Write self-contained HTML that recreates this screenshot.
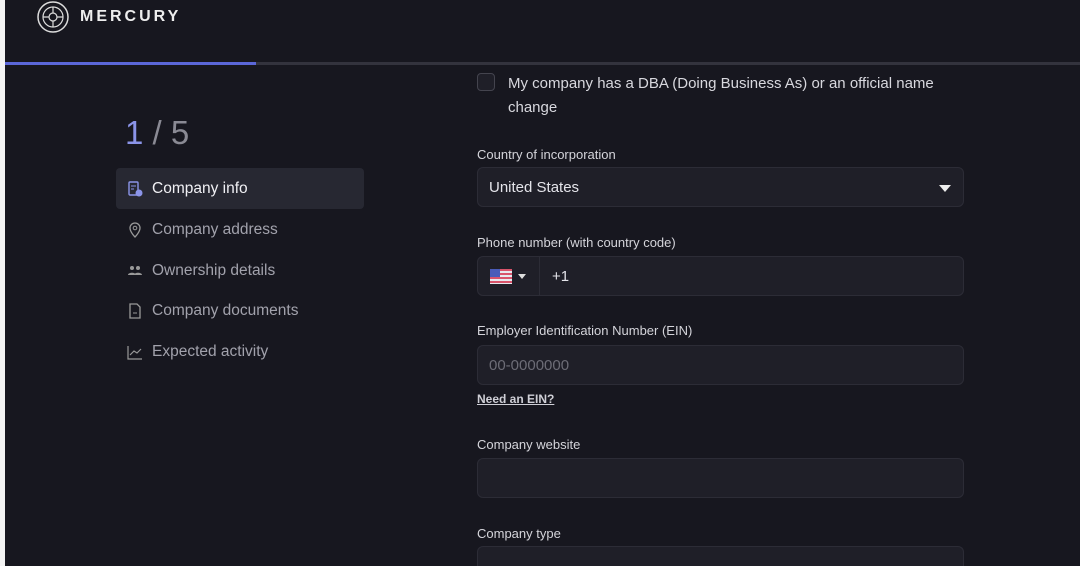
<!DOCTYPE html>
<html style="width:1080px;height:566px;overflow:hidden"><head><style>
*{margin:0;padding:0;box-sizing:border-box}
body{width:1080px;height:566px;overflow:hidden;background:#17171f;font-family:"Liberation Sans",sans-serif;position:relative;color:#e4e4ea}
.strip{position:absolute;left:0;top:0;width:5px;height:566px;background:#f4f4f4}
.brand{font-size:16px;letter-spacing:3px;font-weight:bold;color:#eee;position:absolute;left:80px;top:8px}
.bar{position:absolute;left:5px;top:62px;width:1075px;height:3px;background:#33333d}
.bar i{position:absolute;left:0;top:0;width:251px;height:3px;background:#5b67d8}
.step{position:absolute;left:125px;top:114px;font-size:33px;color:#8a8a94}
.step b{color:#8b94e8;font-weight:normal}
.nav{position:absolute;left:116px;width:248px;height:41px;display:flex;align-items:center;padding-left:11px;font-size:15.5px;color:#a2a2ac;gap:9px}
.nav.act{background:#272832;border-radius:4px;color:#f0f0f4}
.nav svg{width:16px;height:16px}
.lbl{position:absolute;left:477px;font-size:13px;color:#d4d4da}
.inp{position:absolute;left:477px;width:487px;height:40px;background:#1f1f28;border:1px solid #2c2c36;border-radius:6px;font-size:15px;display:flex;align-items:center;padding-left:11px}
.caret{position:absolute;right:12px;top:17px;border-left:6px solid transparent;border-right:6px solid transparent;border-top:7px solid #eee}
</style></head><body>
<div class="strip"></div>
<svg style="position:absolute;left:36px;top:0" width="34" height="34" viewBox="0 0 34 34"><circle cx="17" cy="17" r="15" fill="none" stroke="#ddd" stroke-width="1.5"/><circle cx="17" cy="17" r="10" fill="none" stroke="#ddd" stroke-width="1.2"/><circle cx="17" cy="17" r="4" fill="none" stroke="#ddd" stroke-width="1.2"/><path d="M7 17h6M21 17h6M17 7v6M17 21v6" stroke="#ddd" stroke-width="1.2"/></svg>
<div class="brand">MERCURY</div>
<div class="bar"><i></i></div>
<div class="step"><b>1</b> / 5</div>
<div class="nav act" style="top:168px"><svg viewBox="0 0 16 16"><rect x="2" y="1" width="9" height="13" rx="1" fill="none" stroke="#8b94e8" stroke-width="1.4"/><path d="M4 5h5M4 8h3" stroke="#8b94e8"/><circle cx="12" cy="12" r="3.5" fill="#8b94e8"/></svg>Company info</div>
<div class="nav" style="top:209px"><svg viewBox="0 0 16 16"><path d="M8 15s5-5 5-9A5 5 0 0 0 3 6c0 4 5 9 5 9z" fill="none" stroke="#999" stroke-width="1.3"/><circle cx="8" cy="6" r="1.8" fill="none" stroke="#999"/></svg>Company address</div>
<div class="nav" style="top:250px"><svg viewBox="0 0 16 16"><circle cx="5" cy="5" r="2" fill="#999"/><circle cx="11" cy="5" r="2" fill="#999"/><path d="M1 12c0-3 8-3 8 0zM7 12c0-3 8-3 8 0z" fill="#999"/></svg>Ownership details</div>
<div class="nav" style="top:290px"><svg viewBox="0 0 16 16"><path d="M3 1h7l3 3v11H3z" fill="none" stroke="#999" stroke-width="1.3"/><path d="M6 10h4" stroke="#999"/></svg>Company documents</div>
<div class="nav" style="top:331px"><svg viewBox="0 0 16 16"><path d="M1 2v13h14" fill="none" stroke="#999" stroke-width="1.2"/><path d="M3 11l4-4 3 2 4-4" fill="none" stroke="#999" stroke-width="1.2"/></svg>Expected activity</div>

<div style="position:absolute;left:477px;top:73px;width:18px;height:18px;border:1.5px solid #44444e;border-radius:4px;background:#1f1f28"></div>
<div style="position:absolute;left:508px;top:72px;font-size:15px;line-height:24px;color:#d8d8de;width:460px">My company has a DBA (Doing Business As) or an official name change</div>
<div class="lbl" style="top:147px">Country of incorporation</div>
<div class="inp" style="top:167px">United States<div class="caret"></div></div>
<div class="lbl" style="top:235px">Phone number (with country code)</div>
<div class="inp" style="top:256px;padding-left:0">
<div style="width:62px;height:38px;border-right:1px solid #2c2c36;display:flex;align-items:center;padding-left:12px;gap:6px"><svg width="22" height="15" viewBox="0 0 22 15"><rect width="22" height="15" fill="#e8e8ee"/><path d="M0 1h22M0 5h22M0 9h22M0 13h22" stroke="#d9536a" stroke-width="2"/><rect width="10" height="8" fill="#4a5bb8"/></svg><span style="border-left:4px solid transparent;border-right:4px solid transparent;border-top:5px solid #ddd"></span></div>
<span style="padding-left:12px">+1</span></div>
<div class="lbl" style="top:323px">Employer Identification Number (EIN)</div>
<div class="inp" style="top:345px;color:#6c6c76">00-0000000</div>
<div style="position:absolute;left:477px;top:392px;font-size:12px;font-weight:bold;color:#cfcfd6;text-decoration:underline">Need an EIN?</div>
<div class="lbl" style="top:437px">Company website</div>
<div class="inp" style="top:458px"></div>
<div class="lbl" style="top:526px">Company type</div>
<div class="inp" style="top:546px;height:20px;border-bottom:none;border-radius:6px 6px 0 0"></div>
</body></html>
